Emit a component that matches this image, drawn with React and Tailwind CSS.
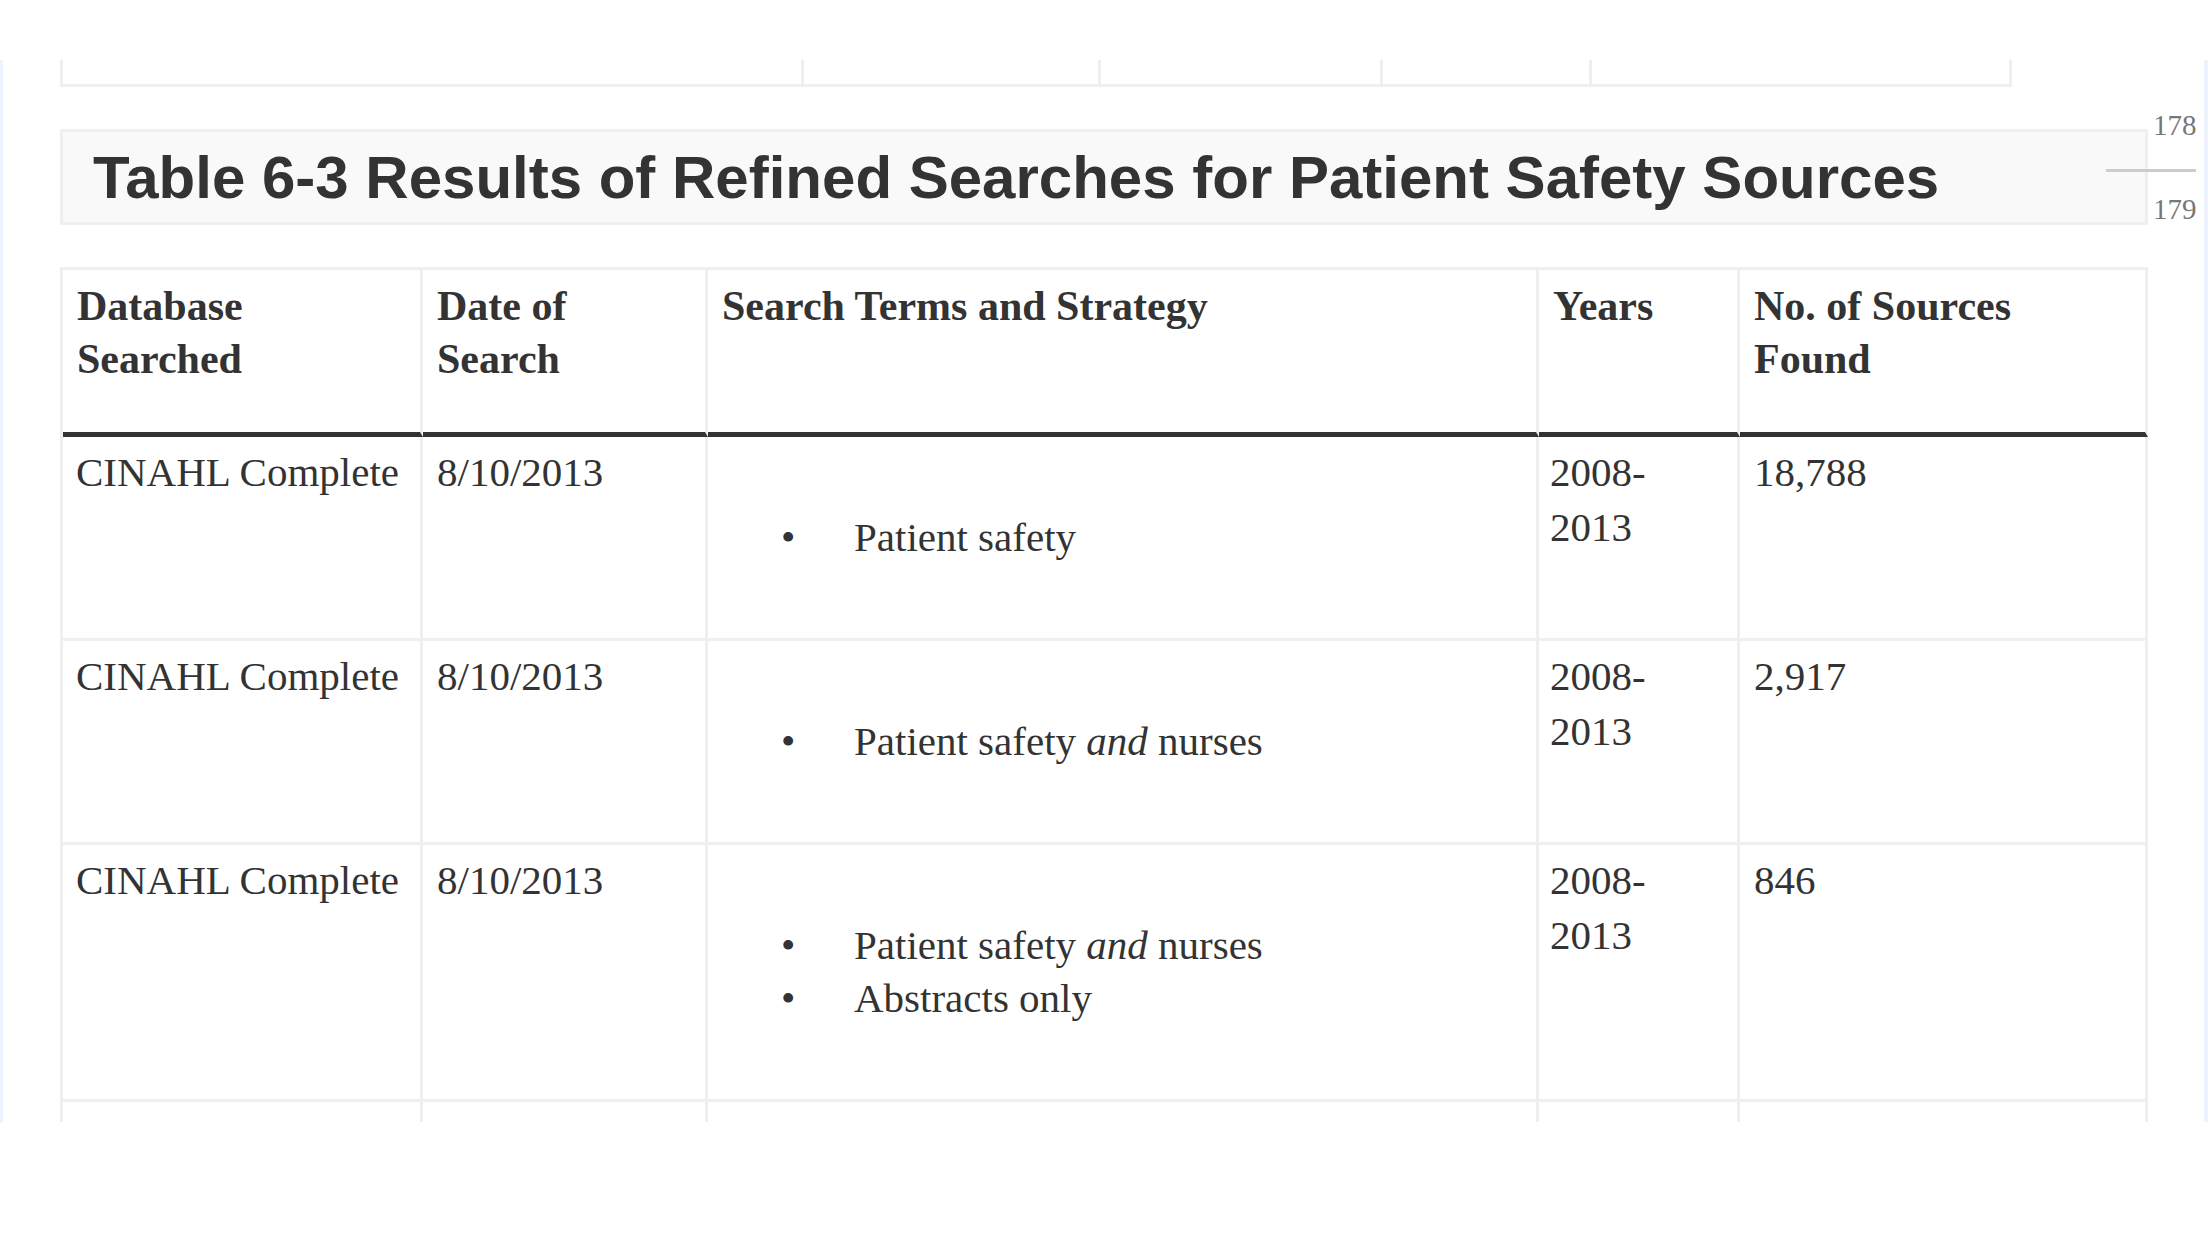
import React from "react";

const rows = [
  { db: "CINAHL Complete", date: "8/10/2013", terms: [["Patient safety"]], years: ["2008-", "2013"], found: "18,788" },
  { db: "CINAHL Complete", date: "8/10/2013", terms: [["Patient safety ", "and", " nurses"]], years: ["2008-", "2013"], found: "2,917" },
  {
    db: "CINAHL Complete",
    date: "8/10/2013",
    terms: [["Patient safety ", "and", " nurses"], ["Abstracts only"]],
    years: ["2008-", "2013"],
    found: "846",
  },
];

const Term = ({ parts }) => (
  <li className="flex">
    <span className="w-[132px] shrink-0 pl-[59px]">•</span>
    <span>
      {parts.map((p, i) => (i === 1 ? <em key={i}>{p}</em> : <span key={i}>{p}</span>))}
    </span>
  </li>
);

const App = () => {
  const td = "border-r-[3px] border-b-[3px] border-[#efefef] px-[14px] pt-[8px] align-top";
  const th = "border-r-[3px] border-b-[5px] border-r-[#efefef] border-b-[#333] px-[14px] pt-[10px] pb-[46px] text-left align-top font-bold text-[42px] leading-[53px]";

  return (
    <div className="w-[2208px] h-[1242px] bg-white text-[#333] font-['Liberation_Serif',serif]">
      <div className="h-[60px]"></div>

      {/* zone de lecture */}
      <div className="relative h-[1062px] overflow-hidden border-l-[3px] border-r-[4px] border-[#edf3fe] pl-[57px]">
        {/* fin du tableau précédent */}
        <div className="flex w-[1952px] h-[27px] border-l-[3px] border-b-[3px] border-[#efefef]">
          <div className="w-[741px] border-r-[3px] border-[#efefef]"></div>
          <div className="w-[297px] border-r-[3px] border-[#efefef]"></div>
          <div className="w-[282px] border-r-[3px] border-[#efefef]"></div>
          <div className="w-[209px] border-r-[3px] border-[#efefef]"></div>
          <div className="w-[420px] border-r-[3px] border-[#efefef]"></div>
        </div>

        {/* titre */}
        <div className="mt-[42px] flex h-[96px] w-[2088px] items-center border-[3px] border-[#efefef] bg-[#f9f9f9] pl-[30px]">
          <h2 className="font-['Liberation_Sans',Arial,sans-serif] text-[60px] font-bold leading-[69px] text-[#333]">
            Table 6-3 Results of Refined Searches for Patient Safety Sources
          </h2>
        </div>

        {/* numéros de page */}
        <div className="absolute left-[2150px] top-[51px] text-[29px] leading-[29px] text-[#777]">178</div>
        <div className="absolute left-[2103px] top-[109px] h-[3px] w-[90px] bg-[#cccccc]"></div>
        <div className="absolute left-[2150px] top-[135px] text-[29px] leading-[29px] text-[#777]">179</div>

        {/* tableau */}
        <table className="mt-[42px] w-[2088px] table-fixed border-separate border-spacing-0 border-l-[3px] border-t-[3px] border-[#efefef] text-[41px] leading-[55px]">
          <colgroup>
            <col className="w-[360px]" />
            <col className="w-[285px]" />
            <col className="w-[831px]" />
            <col className="w-[201px]" />
            <col className="w-[408px]" />
          </colgroup>
          <thead>
            <tr>
              <th className={th}>Database<br />Searched</th>
              <th className={th}>Date of<br />Search</th>
              <th className={th}>Search Terms and Strategy</th>
              <th className={th}>Years</th>
              <th className={th}>No. of Sources<br />Found</th>
            </tr>
          </thead>
          <tbody>
            {rows.map((r, i) => (
              <tr key={i}>
                <td className={`${td} whitespace-nowrap pl-[13px]`}>{r.db}</td>
                <td className={td}>{r.date}</td>
                <td className="border-r-[3px] border-b-[3px] border-[#efefef] px-[14px] align-middle">
                  <ul className="py-[74px] leading-[53px]">
                    {r.terms.map((t, j) => (
                      <Term key={j} parts={t} />
                    ))}
                  </ul>
                </td>
                <td className={`${td} pl-[11px]`}>
                  {r.years[0]}
                  <br />
                  {r.years[1]}
                </td>
                <td className={td}>{r.found}</td>
              </tr>
            ))}
            <tr>
              <td className={`${td} h-[200px]`}></td>
              <td className={td}></td>
              <td className={td}></td>
              <td className={td}></td>
              <td className={td}></td>
            </tr>
          </tbody>
        </table>
      </div>
    </div>
  );
};

export default App;
